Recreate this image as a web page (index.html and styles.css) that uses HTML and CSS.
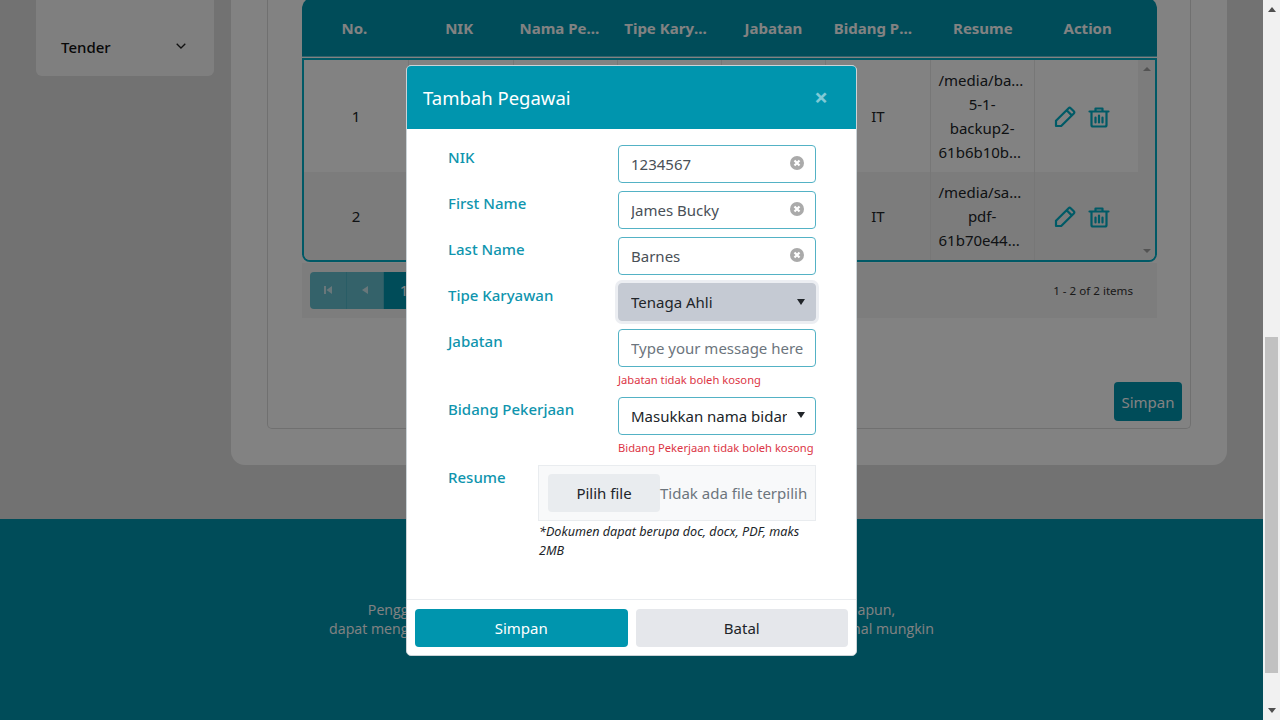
FILE: index.html
```html
<!DOCTYPE html>
<html lang="id">
<head>
<meta charset="utf-8">
<title>Tambah Pegawai</title>
<link rel="stylesheet" href="styles.css">
</head>
<body>
<div class="viewport">
  <div class="page">
    <main class="main">
      <aside class="sidebar">
        <div class="side-item"><span>Tender</span>
          <svg class="chev" viewBox="0 0 10 6" width="10" height="6"><path d="M.7.7 5 5 9.3.7" fill="none" stroke="currentColor" stroke-width="1.3"/></svg>
        </div>
      </aside>
      <section class="card">
        <div class="box">
          <div class="grid">
            <div class="grid-head">
              <div class="th">No.</div><div class="th">NIK</div><div class="th lim">Nama Pegawai</div><div class="th lim">Tipe Karyawan</div><div class="th">Jabatan</div><div class="th lim">Bidang Pekerjaan</div><div class="th">Resume</div><div class="th">Action</div>
            </div>
            <div class="grid-body">
              <div class="rows">
                <div class="row r1">
                  <div class="td">1</div><div class="td"></div><div class="td"></div><div class="td"></div><div class="td"></div><div class="td line">IT</div>
                  <div class="td line res"><span class="cut">/media/ba...</span><span>5-1-</span><span>backup2-</span><span class="cut">61b6b10b...</span></div>
                  <div class="td line act">
                    <svg class="ic" viewBox="0 0 22 22" width="22" height="22"><path d="M2 20v-5.200L14.600 2.200a1.500 1.500 0 0 1 2.100 0l3.100 3.100a1.500 1.500 0 0 1 0 2.100L7.200 20zM12.600 4.200l5.200 5.200" /></svg>
                    <svg class="ic" viewBox="0 0 22 22" width="22" height="22"><path d="M1.500 5.500h19M7.500 5.500V2.500h7v3M3.500 5.500V19a1.500 1.500 0 0 0 1.500 1.500h12a1.500 1.500 0 0 0 1.500-1.500V5.500M7.500 11.500v5M11 9.500v7M14.500 11.500v5"/></svg>
                  </div>
                </div>
                <div class="row r2">
                  <div class="td">2</div><div class="td"></div><div class="td"></div><div class="td"></div><div class="td"></div><div class="td line">IT</div>
                  <div class="td line res"><span class="cut">/media/sa...</span><span>pdf-</span><span class="cut">61b70e44...</span></div>
                  <div class="td line act">
                    <svg class="ic" viewBox="0 0 22 22" width="22" height="22"><path d="M2 20v-5.200L14.600 2.200a1.500 1.500 0 0 1 2.100 0l3.100 3.100a1.500 1.500 0 0 1 0 2.100L7.200 20zM12.600 4.200l5.200 5.200" /></svg>
                    <svg class="ic" viewBox="0 0 22 22" width="22" height="22"><path d="M1.500 5.500h19M7.500 5.500V2.500h7v3M3.500 5.500V19a1.500 1.500 0 0 0 1.500 1.500h12a1.500 1.500 0 0 0 1.500-1.500V5.500M7.500 11.500v5M11 9.500v7M14.500 11.500v5"/></svg>
                  </div>
                </div>
              </div>
              <div class="grid-scroll"><i class="up"></i><i class="down"></i></div>
            </div>
            <div class="pager">
              <div class="pages">
                <button class="pg off"><svg viewBox="0 0 10 10" width="10" height="10"><path d="M1 1h2v8H1zM9 1v8L3.500 5z" fill="currentColor"/></svg></button>
                <button class="pg off"><svg viewBox="0 0 10 10" width="10" height="10"><path d="M8 1v8L2 5z" fill="currentColor"/></svg></button>
                <button class="pg cur">1</button>
              </div>
              <div class="count">1 - 2 of 2 items</div>
            </div>
          </div>
          <button class="save">Simpan</button>
        </div>
      </section>
    </main>
    <footer class="foot">
      <p>Pengguna dapat mengakses sistem informasi ini dari perangkat bentuk apapun,<br>dapat mengelola data pegawai dan tender dengan mudah agar hasilnya seoptimal mungkin</p>
    </footer>

    <div class="overlay">
      <div class="modal">
        <header class="m-head">
          <h2>Tambah Pegawai</h2>
          <button class="close">×</button>
        </header>
        <form class="m-body">
          <div class="f-row">
            <label>NIK</label>
            <div class="ctl"><input type="text" value="1234567"><svg class="clr" viewBox="0 0 14 14" width="14" height="14"><circle cx="7" cy="7" r="7"/><path d="M4.500 4.500l5 5M9.500 4.500l-5 5"/></svg></div>
          </div>
          <div class="f-row">
            <label>First Name</label>
            <div class="ctl"><input type="text" value="James Bucky"><svg class="clr" viewBox="0 0 14 14" width="14" height="14"><circle cx="7" cy="7" r="7"/><path d="M4.500 4.500l5 5M9.500 4.500l-5 5"/></svg></div>
          </div>
          <div class="f-row">
            <label>Last Name</label>
            <div class="ctl"><input type="text" value="Barnes"><svg class="clr" viewBox="0 0 14 14" width="14" height="14"><circle cx="7" cy="7" r="7"/><path d="M4.500 4.500l5 5M9.500 4.500l-5 5"/></svg></div>
          </div>
          <div class="f-row">
            <label>Tipe Karyawan</label>
            <div class="ctl"><select class="sel focus"><option>Tenaga Ahli</option></select><svg class="arr" viewBox="0 0 8 6" width="8" height="6"><path d="M0 0h8L4 6z"/></svg></div>
          </div>
          <div class="f-row">
            <label>Jabatan</label>
            <div class="ctl"><input type="text" placeholder="Type your message here"><p class="err">Jabatan tidak boleh kosong</p></div>
          </div>
          <div class="f-row">
            <label>Bidang Pekerjaan</label>
            <div class="ctl"><select class="sel"><option>Masukkan nama bidang pekerjaan</option></select><svg class="arr" viewBox="0 0 8 6" width="8" height="6"><path d="M0 0h8L4 6z"/></svg><p class="err">Bidang Pekerjaan tidak boleh kosong</p></div>
          </div>
          <div class="f-row">
            <label class="short">Resume</label>
            <div class="upload">
              <div class="file"><button type="button">Pilih file</button><span>Tidak ada file terpilih</span></div>
              <p class="note">*Dokumen dapat berupa doc, docx, PDF, maks 2MB</p>
            </div>
          </div>
        </form>
        <div class="m-foot">
          <button class="b-save">Simpan</button>
          <button class="b-cancel">Batal</button>
        </div>
      </div>
    </div>
  </div>
  <div class="bar"><i class="up"></i><div class="thumb"></div><i class="down"></i></div>
</div>
</body>
</html>
```
FILE: styles.css
```css
* { box-sizing: border-box; }
html, body { margin: 0; height: 720px; overflow: hidden; }
body { font-family: "Noto Sans", "Open Sans", sans-serif; font-size: 15px; color: #212529; }
button, input, select { font-family: inherit; font-size: 15px; }
p { margin: 0; }

.viewport { display: flex; height: 720px; }
.page { position: relative; width: 1263px; display: flex; flex-direction: column; overflow: hidden; background: #e0e0e0; }

.main { height: 519px; flex: none; display: flex; align-items: flex-start; padding-left: 36px; }
.sidebar { width: 178px; height: 76px; background: #fafafa; border-radius: 0 0 6px 6px; padding: 35px 28px 0 25px; }
.side-item { display: flex; justify-content: space-between; align-items: center; line-height: 24px; font-weight: 500; color: #111; }
.chev { color: #222; margin-top: -2px; }

.card { width: 996px; height: 465px; margin-left: 17px; background: #fff; border-radius: 0 0 14px 14px; padding: 0 36px; }
.box { height: 429px; border: 1px solid #dcdcdc; border-top: 0; border-radius: 0 0 5px 5px; padding-left: 34px; display: flex; flex-direction: column; }
.grid { width: 855px; }
.grid-head { display: grid; grid-template-columns: repeat(8, 104.75px); height: 60px; margin-top: -3px; padding-top: 3px; background: #0095af; border-radius: 12px 12px 0 0; border-bottom: 1px solid #5fc3d4; }
.th { padding: 0 8px; line-height: 56px; font-weight: 700; color: #fff; text-align: center; white-space: nowrap; overflow: hidden; text-overflow: ellipsis; }
.th.lim { text-align: left; padding-right: 10px; }

.grid-body { display: flex; margin-top: 1px; height: 204px; border: 2px solid #00aec8; border-radius: 0 0 8px 8px; overflow: hidden; }
.rows { width: 834px; }
.row { display: grid; grid-template-columns: repeat(8, 104.25px); }
.r1 { height: 112px; background: #fff; }
.r2 { height: 88px; background: #f3f3f3; }
.td { display: flex; flex-direction: column; align-items: center; justify-content: center; line-height: 24px; border-left: 1px solid #eaeaea; }
.td:first-child { border-left: 0; }
.res span { display: block; }
.res .cut { align-self: flex-start; padding-left: 8px; }
.act { flex-direction: row; gap: 12px; padding: 1px 9px 0 0; }
.ic { fill: none; stroke: #00b0c8; stroke-width: 2.2; stroke-linejoin: round; stroke-linecap: round; }
.grid-scroll { flex: 1; background: #f3f3f3; display: flex; flex-direction: column; justify-content: space-between; align-items: center; padding: 7px 0; }
.up, .down { display: block; width: 0; height: 0; border-left: 4px solid transparent; border-right: 4px solid transparent; }
.up { border-bottom: 4px solid #a3a3a3; }
.down { border-top: 4px solid #a3a3a3; }

.pager { margin-top: 1px; height: 55px; background: #f5f5f5; display: flex; align-items: center; justify-content: space-between; padding: 0 24px 0 8px; }
.pages { display: flex; margin-top: -1px; }
.pg { height: 37px; border: 0; padding: 0; color: #fff; display: flex; align-items: center; justify-content: center; }
.pg.off { width: 37px; background: #66c1d1; color: #cfeaf0; border-right: 1px solid #52b6c8; }
.pg.off:first-child { border-radius: 4px 0 0 4px; }
.pg.cur { width: 40px; background: #0095af; }
.count { font-size: 11.6px; line-height: 18px; color: #333; }

.save { align-self: flex-end; margin-top: auto; margin-bottom: 7px; margin-right: 8px; width: 68px; height: 39px; background: #0095af; color: #fff; border: 0; border-radius: 4px; padding: 0; }

.foot { height: 201px; flex: none; background: #0095af; padding-top: 82px; }
.foot p { font-family: "Open Sans", sans-serif; font-size: 14.2px; line-height: 18.5px; color: #fff; text-align: center; }

.overlay { position: absolute; inset: 0; background: rgba(0, 0, 0, .49); display: flex; justify-content: center; align-items: flex-start; padding-top: 65px; }
.modal { width: 451px; height: 591px; background: #fff; border: 1px solid #cbd3d7; border-radius: 5px; display: flex; flex-direction: column; overflow: hidden; }
.m-head { height: 63px; flex: none; background: #0095ae; display: flex; align-items: center; justify-content: space-between; padding: 0 28px 0 16px; }
.m-head h2 { margin: 0; font-size: 18.5px; font-weight: 400; color: #fff; line-height: 30px; }
.close { background: none; border: 0; padding: 0; font-size: 24px; line-height: 24px; font-weight: 700; color: #fff; opacity: .5; margin-top: -2px; }

.m-body { flex: 1; padding: 16px 40px 0 41px; display: flex; flex-direction: column; gap: 8px; }
.f-row { display: flex; }
.f-row label { width: 170px; flex: none; line-height: 24px; font-weight: 500; color: #0f95ae; }
.f-row label.short { width: 90px; }
.ctl { position: relative; width: 198px; }
.ctl input { display: block; width: 100%; height: 38px; border: 1px solid #53b2c5; border-radius: 4px; padding: 0 12px; color: #495057; background: #fff; outline: none; }
.ctl input::placeholder { color: #6c757d; opacity: 1; }
.clr { position: absolute; right: 12px; top: 11px; }
.clr circle { fill: #aaa; }
.clr path { stroke: #fff; stroke-width: 2.2; fill: none; }
.sel { display: block; width: 100%; height: 38px; appearance: none; -webkit-appearance: none; background: #fff; border: 1px solid #53b2c5; border-radius: 4px; padding: 0 28px 0 12px; color: #212529; outline: none; }
.sel.focus { background: #c5cad3; border-color: #c5cad3; box-shadow: 0 0 0 3px #eceef2; }
.arr { position: absolute; right: 11px; top: 15px; }
.sel.focus + .arr { top: 16px; }
.arr path { fill: #212529; }
.err { margin-top: 4px; font-size: 11.2px; line-height: 18px; color: #dc3545; white-space: nowrap; }
.upload { width: 278px; }
.file { height: 56px; background: #f8f9fa; border: 1px solid #e9ecef; display: flex; align-items: center; padding-left: 9px; white-space: nowrap; overflow: hidden; }
.file button { width: 112px; height: 38px; flex: none; background: #e9ecef; border: 0; border-radius: 4px; color: #212529; padding: 0; }
.file span { color: #6c757d; }
.note { margin-top: 1px; padding-left: 1px; font-size: 12.6px; line-height: 19px; font-style: italic; color: #212529; }
.m-foot { height: 56px; flex: none; border-top: 1px solid #e9ecef; padding: 9px 8px 8px; display: flex; gap: 8px; }
.m-foot button { flex: 1; border: 0; border-radius: 4px; padding: 0; }
.b-save { background: #0095ae; color: #fff; }
.b-cancel { background: #e5e7eb; color: #212529; }

.bar { width: 17px; background: #f1f1f1; display: flex; flex-direction: column; align-items: center; padding: 7px 0; }
.bar .up { border-bottom-color: #505050; border-bottom-width: 5px; }
.bar .down { border-top-color: #505050; border-top-width: 5px; margin-top: auto; }
.thumb { width: 13px; height: 336px; margin-top: 325px; background: #c1c1c1; }
```
